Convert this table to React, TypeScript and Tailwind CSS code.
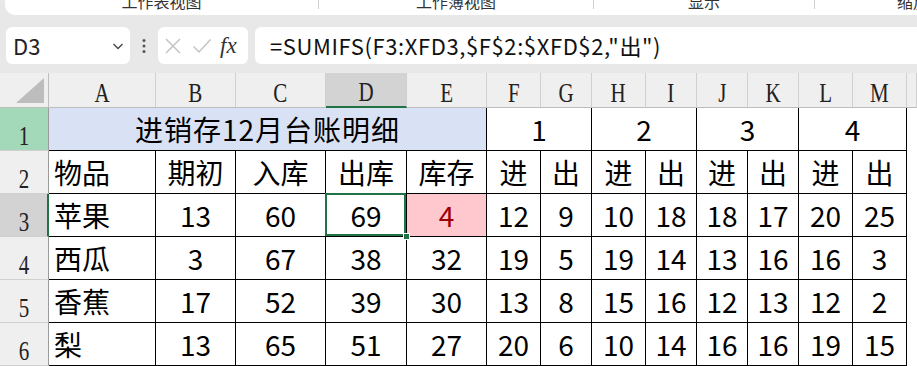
import React from "react";

const cols = ["A", "B", "C", "D", "E", "F", "G", "H", "I", "J", "K", "L", "M", ""];

const head = ["物品", "期初", "入库", "出库", "库存", "进", "出", "进", "出", "进", "出", "进", "出"];

const rows: (string | number)[][] = [
  ["苹果", 13, 60, 69, 4, 12, 9, 10, 18, 18, 17, 20, 25],
  ["西瓜", 3, 67, 38, 32, 19, 5, 19, 14, 13, 16, 16, 3],
  ["香蕉", 17, 52, 39, 30, 13, 8, 15, 16, 12, 13, 12, 2],
  ["梨", 13, 65, 51, 27, 20, 6, 10, 14, 16, 16, 19, 15],
];

const cjk = { fontFamily: '"Noto Sans CJK SC", "Noto Sans", sans-serif' };
const serif = { fontFamily: '"Liberation Serif", "Noto Sans CJK SC", serif' };

function RowHead({ n, state }: { n: number; state?: "green" | "sel" }) {
  const bg =
    state === "green" ? "bg-[#a3d8b9]" : state === "sel" ? "bg-[#d3d3d3]" : "bg-[#efefef]";
  const br = state === "sel" ? "border-r-2 border-r-[#217346]" : "border-r border-r-[#9a9a9a]";
  return (
    <div
      className={`${bg} ${br} border-b border-b-[#d0d0d0] flex items-end justify-center text-[28px] leading-none text-[#222]`}
      style={serif}
    >
      <span className="inline-block scale-x-75">{n}</span>
    </div>
  );
}

function Cell({
  children,
  left,
  className = "",
}: {
  children?: React.ReactNode;
  left?: boolean;
  className?: string;
}) {
  return (
    <div
      className={`border-r border-b border-black flex items-center text-[28px] leading-none text-black ${
        left ? "justify-start pl-[5px]" : "justify-center"
      } ${className}`}
      style={cjk}
    >
      {children}
    </div>
  );
}

export default function App(): JSX.Element {
  return (
    <div className="w-[917px] h-[366px] overflow-hidden bg-[#e8e8e8]">
      {/* ribbon tail */}
      <div
        className="ml-[5px] h-[15px] bg-white rounded-bl-[10px] flex overflow-hidden text-[16px] leading-none text-[#333] whitespace-nowrap"
        style={cjk}
      >
        <div className="w-[314px] shrink-0 flex justify-center border-r border-[#d0d0d0] h-[9px]">
          <span className="-mt-[7px]">工作表视图</span>
        </div>
        <div className="w-[275px] shrink-0 flex justify-center border-r border-[#d0d0d0] h-[9px]">
          <span className="-mt-[7px]">工作簿视图</span>
        </div>
        <div className="w-[221px] shrink-0 flex justify-center border-r border-[#d0d0d0] h-[9px]">
          <span className="-mt-[7px]">显示</span>
        </div>
        <div className="w-[200px] shrink-0 flex justify-start pl-[82px] h-[9px]">
          <span className="-mt-[7px]">缩放</span>
        </div>
      </div>

      {/* formula bar */}
      <div className="mt-[12px] h-[37px] flex items-stretch">
        <div className="ml-[6px] w-[124px] bg-white rounded-[6px] flex items-center justify-between pl-[7px] pr-[5px]">
          <span className="text-[22px] text-[#222]" style={cjk}>
            D3
          </span>
          <svg width="14" height="14" viewBox="0 0 14 14">
            <path d="M2.5 5 L7 9.5 L11.5 5" fill="none" stroke="#444" strokeWidth="1.3" />
          </svg>
        </div>
        <div className="w-[28px] flex items-center justify-center">
          <svg width="4" height="16" viewBox="0 0 4 16">
            <circle cx="2" cy="2.5" r="1.5" fill="#555" />
            <circle cx="2" cy="8" r="1.5" fill="#555" />
            <circle cx="2" cy="13.5" r="1.5" fill="#555" />
          </svg>
        </div>
        <div className="w-[90px] bg-white rounded-[6px] flex items-center pl-[6px] gap-[10px]">
          <svg width="18" height="18" viewBox="0 0 18 18">
            <path d="M2 2 L16 16 M16 2 L2 16" stroke="#c4c4c4" strokeWidth="1.5" />
          </svg>
          <svg width="20" height="18" viewBox="0 0 20 18">
            <path d="M1.5 9.5 L7 15 L18.5 2.5" fill="none" stroke="#c4c4c4" strokeWidth="1.5" />
          </svg>
          <span className="italic text-[23px] text-[#333] leading-none -ml-[2px]" style={serif}>
            fx
          </span>
        </div>
        <div className="ml-[7px] flex-1 bg-white rounded-l-[6px] flex items-center pl-[15px]">
          <span className="text-[22px] text-[#111] tracking-[0.6px] whitespace-nowrap" style={cjk}>
            =SUMIFS(F3:XFD3,$F$2:$XFD$2,"出")
          </span>
        </div>
      </div>

      {/* sheet */}
      <div className="mt-[9px] grid grid-cols-[49px_107px_80px_90px_81px_80px_54px_51px_54px_51px_51px_51px_54px_54px_1fr] grid-rows-[35px_43px_43px_43px_43px_43px_43px] bg-white">
        {/* corner */}
        <div className="bg-[#efefef] border-r border-b border-[#bdbdbd] flex items-end justify-end pr-[4px] pb-[4px]">
          <svg width="28" height="25" viewBox="0 0 28 25">
            <polygon points="28,0 28,25 0,25" fill="#bdbdbd" />
          </svg>
        </div>
        {cols.map((c, i) => (
          <div
            key={"h" + i}
            className={`${
              c === "D" ? "bg-[#d3d3d3] border-b-2 border-b-[#217346]" : "bg-[#efefef] border-b border-b-[#bdbdbd]"
            } border-r border-r-[#d0d0d0] flex items-end justify-center text-[28px] leading-none text-[#222]`}
            style={serif}
          >
            <span className="inline-block scale-x-75">{c}</span>
          </div>
        ))}

        {/* row 1 */}
        <RowHead n={1} state="green" />
        <Cell className="col-span-5 bg-[#d9e1f4] tracking-[1px]">进销存12月台账明细</Cell>
        <Cell className="col-span-2">1</Cell>
        <Cell className="col-span-2">2</Cell>
        <Cell className="col-span-2">3</Cell>
        <Cell className="col-span-2">4</Cell>
        <div className="bg-white" />

        {/* row 2 */}
        <RowHead n={2} />
        {head.map((h, i) => (
          <Cell key={"t" + i} left={i === 0}>
            {h}
          </Cell>
        ))}
        <div className="bg-white" />

        {/* data rows */}
        {rows.map((r, ri) => (
          <React.Fragment key={"r" + ri}>
            <RowHead n={ri + 3} state={ri === 0 ? "sel" : undefined} />
            {r.map((v, ci) => {
              if (ri === 0 && ci === 3) {
                return (
                  <Cell key={ci} className="relative">
                    {v}
                    <div className="absolute -left-[1px] -top-[1px] right-0 bottom-0 border-2 border-[#217346]" />
                    <div className="absolute -right-[4px] -bottom-[4px] w-[7px] h-[7px] bg-[#217346] border border-white" />
                  </Cell>
                );
              }
              if (ri === 0 && ci === 4) {
                return (
                  <Cell key={ci} className="bg-[#ffc7ce] !text-[#9c0006]">
                    {v}
                  </Cell>
                );
              }
              return (
                <Cell key={ci} left={ci === 0}>
                  {v}
                </Cell>
              );
            })}
            <div className="bg-white" />
          </React.Fragment>
        ))}
      </div>
    </div>
  );
}
